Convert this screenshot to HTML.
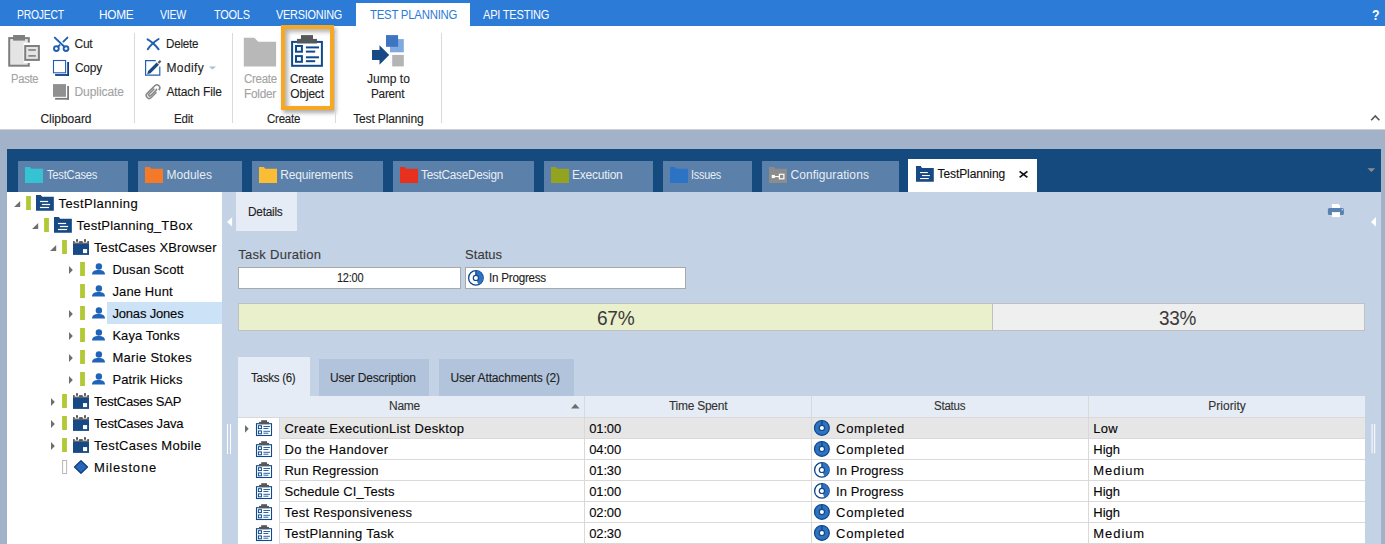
<!DOCTYPE html>
<html><head><meta charset="utf-8"><style>
html,body{margin:0;padding:0;}
body{width:1385px;height:544px;position:relative;overflow:hidden;background:#fff;font-family:"Liberation Sans",sans-serif;}
body>div,body>svg{position:absolute;}
.t{white-space:nowrap;-webkit-text-stroke:0.12px currentColor;}
</style></head><body>
<div style="left:0px;top:0px;width:1385px;height:26px;background:#2b7bd7;"></div>
<div style="left:0px;top:26px;width:1385px;height:103px;background:#ffffff;"></div>
<div style="left:0px;top:129px;width:1385px;height:1px;background:#cfcfcf;"></div>
<div style="left:0px;top:130px;width:1385px;height:414px;background:#a1b2c9;"></div>
<div style="left:7px;top:149px;width:1374px;height:43px;background:#154a7f;"></div>
<div style="left:222px;top:192px;width:1159px;height:352px;background:#c3d2e5;"></div>
<div style="left:7px;top:192px;width:215px;height:352px;background:#ffffff;"></div>
<div style="left:281px;top:25px;width:53px;height:85px;box-sizing:border-box;border:4px solid #f7a823;background:#fff;box-shadow:2px 3px 4px rgba(0,0,0,0.32), inset 3px 3px 4px rgba(0,0,0,0.30);"></div>
<div style="left:356px;top:3px;width:114px;height:23px;background:#ffffff;"></div>
<div class="t" style="left:16.50px;top:8.62px;font-size:12.5px;line-height:12.5px;color:#ffffff;letter-spacing:-0.250px;transform:scaleX(0.8287);transform-origin:0 0;-webkit-text-stroke:0;">PROJECT</div>
<div class="t" style="left:99.40px;top:9.22px;font-size:12.5px;line-height:12.5px;color:#ffffff;letter-spacing:-0.250px;transform:scaleX(0.9442);transform-origin:0 0;-webkit-text-stroke:0;">HOME</div>
<div class="t" style="left:160.40px;top:9.22px;font-size:12.5px;line-height:12.5px;color:#ffffff;letter-spacing:-0.250px;transform:scaleX(0.8429);transform-origin:0 0;-webkit-text-stroke:0;">VIEW</div>
<div class="t" style="left:213.90px;top:9.22px;font-size:12.5px;line-height:12.5px;color:#ffffff;letter-spacing:-0.250px;transform:scaleX(0.8748);transform-origin:0 0;-webkit-text-stroke:0;">TOOLS</div>
<div class="t" style="left:276.20px;top:9.22px;font-size:12.5px;line-height:12.5px;color:#ffffff;letter-spacing:-0.250px;transform:scaleX(0.8697);transform-origin:0 0;-webkit-text-stroke:0;">VERSIONING</div>
<div class="t" style="left:483.40px;top:9.22px;font-size:12.5px;line-height:12.5px;color:#ffffff;letter-spacing:-0.250px;transform:scaleX(0.8846);transform-origin:0 0;-webkit-text-stroke:0;">API TESTING</div>
<div class="t" style="left:369.50px;top:9.22px;font-size:12.5px;line-height:12.5px;color:#2b7bd7;letter-spacing:-0.250px;transform:scaleX(0.9095);transform-origin:0 0;-webkit-text-stroke:0;">TEST PLANNING</div>
<div class="t" style="left:1372.20px;top:7.93px;font-size:14.5px;line-height:14.5px;color:#ffffff;font-weight:bold;-webkit-text-stroke:0;transform:scaleX(0.85);transform-origin:0 0;">?</div>
<div style="left:134px;top:33px;width:1px;height:90px;background:#dadada;"></div>
<div style="left:232px;top:33px;width:1px;height:90px;background:#dadada;"></div>
<div style="left:335px;top:33px;width:1px;height:90px;background:#dadada;"></div>
<div style="left:441px;top:33px;width:1px;height:90px;background:#dadada;"></div>
<div class="t" style="left:10.50px;top:72.54px;font-size:12px;line-height:12px;color:#a3a3a3;letter-spacing:-0.250px;transform:scaleX(0.9264);transform-origin:0 0;">Paste</div>
<div class="t" style="left:74.50px;top:37.74px;font-size:12px;line-height:12px;color:#1e1e1e;letter-spacing:-0.236px;">Cut</div>
<div class="t" style="left:74.50px;top:62.04px;font-size:12px;line-height:12px;color:#1e1e1e;letter-spacing:-0.250px;transform:scaleX(0.9942);transform-origin:0 0;">Copy</div>
<div class="t" style="left:74.50px;top:85.64px;font-size:12px;line-height:12px;color:#a3a3a3;letter-spacing:-0.066px;">Duplicate</div>
<div class="t" style="left:40.50px;top:112.64px;font-size:12px;line-height:12px;color:#1e1e1e;letter-spacing:-0.045px;">Clipboard</div>
<div class="t" style="left:166.40px;top:37.74px;font-size:12px;line-height:12px;color:#1e1e1e;letter-spacing:-0.250px;transform:scaleX(0.9688);transform-origin:0 0;">Delete</div>
<div class="t" style="left:166.40px;top:62.04px;font-size:12px;line-height:12px;color:#1e1e1e;letter-spacing:0.412px;">Modify</div>
<div class="t" style="left:166.40px;top:85.64px;font-size:12px;line-height:12px;color:#1e1e1e;letter-spacing:-0.109px;">Attach File</div>
<div class="t" style="left:173.50px;top:112.64px;font-size:12px;line-height:12px;color:#1e1e1e;letter-spacing:-0.250px;transform:scaleX(0.9636);transform-origin:0 0;">Edit</div>
<div class="t" style="left:243.80px;top:72.84px;font-size:12px;line-height:12px;color:#a3a3a3;letter-spacing:-0.250px;transform:scaleX(0.9522);transform-origin:0 0;">Create</div>
<div class="t" style="left:243.80px;top:87.64px;font-size:12px;line-height:12px;color:#a3a3a3;letter-spacing:-0.250px;transform:scaleX(0.9857);transform-origin:0 0;">Folder</div>
<div class="t" style="left:290.30px;top:72.84px;font-size:12px;line-height:12px;color:#1e1e1e;letter-spacing:-0.250px;transform:scaleX(0.9694);transform-origin:0 0;">Create</div>
<div class="t" style="left:290.30px;top:87.64px;font-size:12px;line-height:12px;color:#1e1e1e;letter-spacing:-0.196px;">Object</div>
<div class="t" style="left:267.40px;top:112.64px;font-size:12px;line-height:12px;color:#1e1e1e;letter-spacing:-0.250px;transform:scaleX(0.9608);transform-origin:0 0;">Create</div>
<div class="t" style="left:367.00px;top:72.84px;font-size:12px;line-height:12px;color:#1e1e1e;letter-spacing:0.019px;">Jump to</div>
<div class="t" style="left:371.40px;top:87.64px;font-size:12px;line-height:12px;color:#1e1e1e;letter-spacing:-0.250px;transform:scaleX(0.9794);transform-origin:0 0;">Parent</div>
<div class="t" style="left:353.20px;top:112.64px;font-size:12px;line-height:12px;color:#1e1e1e;letter-spacing:-0.137px;">Test Planning</div>
<div style="left:18px;top:161px;width:110px;height:31px;background:#5b80a9;"></div>
<div class="t" style="left:47.40px;top:168.64px;font-size:12px;line-height:12px;color:#e8eef6;letter-spacing:-0.250px;transform:scaleX(0.9331);transform-origin:0 0;-webkit-text-stroke:0;">TestCases</div>
<div style="left:138px;top:161px;width:104px;height:31px;background:#5b80a9;"></div>
<div class="t" style="left:166.50px;top:168.64px;font-size:12px;line-height:12px;color:#e8eef6;letter-spacing:0.023px;-webkit-text-stroke:0;">Modules</div>
<div style="left:252px;top:161px;width:131px;height:31px;background:#5b80a9;"></div>
<div class="t" style="left:280.30px;top:168.64px;font-size:12px;line-height:12px;color:#e8eef6;letter-spacing:-0.191px;-webkit-text-stroke:0;">Requirements</div>
<div style="left:393px;top:161px;width:141px;height:31px;background:#5b80a9;"></div>
<div class="t" style="left:421.20px;top:168.64px;font-size:12px;line-height:12px;color:#e8eef6;letter-spacing:-0.250px;transform:scaleX(0.9783);transform-origin:0 0;-webkit-text-stroke:0;">TestCaseDesign</div>
<div style="left:544px;top:161px;width:109px;height:31px;background:#5b80a9;"></div>
<div class="t" style="left:572.00px;top:168.64px;font-size:12px;line-height:12px;color:#e8eef6;letter-spacing:-0.238px;-webkit-text-stroke:0;">Execution</div>
<div style="left:663px;top:161px;width:89px;height:31px;background:#5b80a9;"></div>
<div class="t" style="left:691.40px;top:168.64px;font-size:12px;line-height:12px;color:#e8eef6;letter-spacing:-0.250px;transform:scaleX(0.9034);transform-origin:0 0;-webkit-text-stroke:0;">Issues</div>
<div style="left:762px;top:161px;width:137px;height:31px;background:#5b80a9;"></div>
<div class="t" style="left:790.40px;top:168.64px;font-size:12px;line-height:12px;color:#e8eef6;letter-spacing:0.086px;-webkit-text-stroke:0;">Configurations</div>
<div style="left:908px;top:159px;width:129px;height:33px;background:#ffffff;"></div>
<div class="t" style="left:937.50px;top:168.34px;font-size:12px;line-height:12px;color:#111111;letter-spacing:-0.092px;">TestPlanning</div>
<div style="left:107px;top:302px;width:115px;height:22px;background:#cce3f7;"></div>
<div class="t" style="left:58.50px;top:196.90px;font-size:13px;line-height:13px;color:#050505;letter-spacing:0.433px;">TestPlanning</div>
<div class="t" style="left:76.50px;top:218.90px;font-size:13px;line-height:13px;color:#050505;letter-spacing:0.243px;">TestPlanning_TBox</div>
<div class="t" style="left:94.00px;top:240.90px;font-size:13px;line-height:13px;color:#050505;letter-spacing:0.109px;">TestCases XBrowser</div>
<div class="t" style="left:112.40px;top:262.90px;font-size:13px;line-height:13px;color:#050505;letter-spacing:0.049px;">Dusan Scott</div>
<div class="t" style="left:112.40px;top:284.90px;font-size:13px;line-height:13px;color:#050505;letter-spacing:0.129px;">Jane Hunt</div>
<div class="t" style="left:112.40px;top:306.90px;font-size:13px;line-height:13px;color:#050505;letter-spacing:-0.170px;">Jonas Jones</div>
<div class="t" style="left:112.40px;top:328.90px;font-size:13px;line-height:13px;color:#050505;letter-spacing:0.049px;">Kaya Tonks</div>
<div class="t" style="left:112.40px;top:350.90px;font-size:13px;line-height:13px;color:#050505;letter-spacing:0.313px;">Marie Stokes</div>
<div class="t" style="left:112.40px;top:372.90px;font-size:13px;line-height:13px;color:#050505;letter-spacing:0.126px;">Patrik Hicks</div>
<div class="t" style="left:94.00px;top:394.90px;font-size:13px;line-height:13px;color:#050505;letter-spacing:-0.250px;transform:scaleX(0.9999);transform-origin:0 0;">TestCases SAP</div>
<div class="t" style="left:94.00px;top:416.90px;font-size:13px;line-height:13px;color:#050505;letter-spacing:-0.174px;">TestCases Java</div>
<div class="t" style="left:94.00px;top:438.90px;font-size:13px;line-height:13px;color:#050505;letter-spacing:0.307px;">TestCases Mobile</div>
<div class="t" style="left:94.00px;top:460.90px;font-size:13px;line-height:13px;color:#050505;letter-spacing:0.820px;">Milestone</div>
<div style="left:236px;top:192px;width:61px;height:39px;background:#e6ecf5;"></div>
<div class="t" style="left:248.10px;top:205.64px;font-size:12px;line-height:12px;color:#1e1e1e;letter-spacing:-0.250px;transform:scaleX(0.9862);transform-origin:0 0;">Details</div>
<div class="t" style="left:238.30px;top:247.70px;font-size:13px;line-height:13px;color:#3a3a3a;letter-spacing:0.268px;">Task Duration</div>
<div class="t" style="left:465.00px;top:247.70px;font-size:13px;line-height:13px;color:#3a3a3a;letter-spacing:0.049px;">Status</div>
<div style="left:238px;top:267px;width:223px;height:22px;background:#ffffff;box-sizing:border-box;border:1px solid #a9a9a9;"></div>
<div style="left:465px;top:267px;width:221px;height:22px;background:#ffffff;box-sizing:border-box;border:1px solid #a9a9a9;"></div>
<div class="t" style="left:336.60px;top:271.94px;font-size:12px;line-height:12px;color:#1e1e1e;letter-spacing:-0.250px;transform:scaleX(0.9130);transform-origin:0 0;">12:00</div>
<div class="t" style="left:489.30px;top:271.94px;font-size:12px;line-height:12px;color:#1e1e1e;letter-spacing:-0.250px;transform:scaleX(0.9719);transform-origin:0 0;">In Progress</div>
<div style="left:238px;top:303px;width:1127px;height:28px;background:#efefef;box-sizing:border-box;border:1px solid #c0c0c0;"></div>
<div style="left:239px;top:304px;width:753px;height:26px;background:#eaf0cb;"></div>
<div style="left:992px;top:304px;width:1px;height:26px;background:#c0c0c0;"></div>
<div class="t" style="left:596.50px;top:307.87px;font-size:20px;line-height:20px;color:#3a3a3a;letter-spacing:-0.250px;transform:scaleX(0.9539);transform-origin:0 0;-webkit-text-stroke:0;">67%</div>
<div class="t" style="left:1159.30px;top:307.87px;font-size:20px;line-height:20px;color:#3a3a3a;letter-spacing:-0.250px;transform:scaleX(0.9464);transform-origin:0 0;-webkit-text-stroke:0;">33%</div>
<div style="left:238px;top:357px;width:72px;height:39px;background:#e6ecf5;"></div>
<div style="left:319px;top:359px;width:110px;height:37px;background:#b1c4dc;"></div>
<div style="left:439px;top:359px;width:135px;height:37px;background:#b1c4dc;"></div>
<div class="t" style="left:250.80px;top:371.54px;font-size:12px;line-height:12px;color:#1e1e1e;letter-spacing:-0.250px;transform:scaleX(0.9577);transform-origin:0 0;">Tasks (6)</div>
<div class="t" style="left:330.00px;top:371.84px;font-size:12px;line-height:12px;color:#1e1e1e;letter-spacing:-0.186px;">User Description</div>
<div class="t" style="left:450.40px;top:371.84px;font-size:12px;line-height:12px;color:#1e1e1e;letter-spacing:-0.158px;">User Attachments (2)</div>
<div style="left:238px;top:396px;width:1127px;height:21px;background:#e6ecf5;"></div>
<div style="left:238px;top:417px;width:1127px;height:127px;background:#ffffff;"></div>
<div style="left:280px;top:417px;width:1085px;height:21px;background:#e6e6e6;"></div>
<div style="left:238px;top:417px;width:1127px;height:1px;background:#d9d9d9;"></div>
<div style="left:280px;top:438px;width:1085px;height:1px;background:#d9d9d9;"></div>
<div style="left:280px;top:459px;width:1085px;height:1px;background:#d9d9d9;"></div>
<div style="left:280px;top:480px;width:1085px;height:1px;background:#d9d9d9;"></div>
<div style="left:280px;top:501px;width:1085px;height:1px;background:#d9d9d9;"></div>
<div style="left:280px;top:522px;width:1085px;height:1px;background:#d9d9d9;"></div>
<div style="left:280px;top:543px;width:1085px;height:1px;background:#d9d9d9;"></div>
<div style="left:584px;top:396px;width:1px;height:148px;background:#d9d9d9;"></div>
<div style="left:811px;top:396px;width:1px;height:148px;background:#d9d9d9;"></div>
<div style="left:1088px;top:396px;width:1px;height:148px;background:#d9d9d9;"></div>
<div style="left:279px;top:417px;width:1px;height:127px;background:#d9d9d9;"></div>
<div class="t" style="left:388.60px;top:400.44px;font-size:12px;line-height:12px;color:#333333;letter-spacing:-0.250px;transform:scaleX(0.9979);transform-origin:0 0;">Name</div>
<div class="t" style="left:669.40px;top:400.44px;font-size:12px;line-height:12px;color:#333333;letter-spacing:-0.250px;transform:scaleX(0.9972);transform-origin:0 0;">Time Spent</div>
<div class="t" style="left:934.30px;top:400.44px;font-size:12px;line-height:12px;color:#333333;letter-spacing:-0.250px;transform:scaleX(0.9612);transform-origin:0 0;">Status</div>
<div class="t" style="left:1208.30px;top:400.44px;font-size:12px;line-height:12px;color:#333333;letter-spacing:0.024px;">Priority</div>
<div class="t" style="left:284.40px;top:421.60px;font-size:13px;line-height:13px;color:#050505;letter-spacing:0.309px;">Create ExecutionList Desktop</div>
<div class="t" style="left:589.20px;top:421.60px;font-size:13px;line-height:13px;color:#050505;letter-spacing:-0.132px;">01:00</div>
<div class="t" style="left:836.10px;top:421.60px;font-size:13px;line-height:13px;color:#050505;letter-spacing:0.666px;">Completed</div>
<div class="t" style="left:1093.30px;top:421.60px;font-size:13px;line-height:13px;color:#050505;letter-spacing:0.209px;">Low</div>
<div class="t" style="left:284.40px;top:442.60px;font-size:13px;line-height:13px;color:#050505;letter-spacing:0.387px;">Do the Handover</div>
<div class="t" style="left:589.20px;top:442.60px;font-size:13px;line-height:13px;color:#050505;letter-spacing:-0.132px;">04:00</div>
<div class="t" style="left:836.10px;top:442.60px;font-size:13px;line-height:13px;color:#050505;letter-spacing:0.666px;">Completed</div>
<div class="t" style="left:1093.30px;top:442.60px;font-size:13px;line-height:13px;color:#050505;letter-spacing:-0.014px;">High</div>
<div class="t" style="left:284.40px;top:463.60px;font-size:13px;line-height:13px;color:#050505;letter-spacing:0.076px;">Run Regression</div>
<div class="t" style="left:589.20px;top:463.60px;font-size:13px;line-height:13px;color:#050505;letter-spacing:-0.132px;">01:30</div>
<div class="t" style="left:836.10px;top:463.60px;font-size:13px;line-height:13px;color:#050505;letter-spacing:0.093px;">In Progress</div>
<div class="t" style="left:1093.30px;top:463.60px;font-size:13px;line-height:13px;color:#050505;letter-spacing:0.932px;">Medium</div>
<div class="t" style="left:284.40px;top:484.60px;font-size:13px;line-height:13px;color:#050505;letter-spacing:0.113px;">Schedule CI_Tests</div>
<div class="t" style="left:589.20px;top:484.60px;font-size:13px;line-height:13px;color:#050505;letter-spacing:-0.132px;">01:00</div>
<div class="t" style="left:836.10px;top:484.60px;font-size:13px;line-height:13px;color:#050505;letter-spacing:0.093px;">In Progress</div>
<div class="t" style="left:1093.30px;top:484.60px;font-size:13px;line-height:13px;color:#050505;letter-spacing:-0.014px;">High</div>
<div class="t" style="left:284.40px;top:505.60px;font-size:13px;line-height:13px;color:#050505;letter-spacing:0.265px;">Test Responsiveness</div>
<div class="t" style="left:589.20px;top:505.60px;font-size:13px;line-height:13px;color:#050505;letter-spacing:-0.132px;">02:00</div>
<div class="t" style="left:836.10px;top:505.60px;font-size:13px;line-height:13px;color:#050505;letter-spacing:0.666px;">Completed</div>
<div class="t" style="left:1093.30px;top:505.60px;font-size:13px;line-height:13px;color:#050505;letter-spacing:-0.014px;">High</div>
<div class="t" style="left:284.40px;top:526.60px;font-size:13px;line-height:13px;color:#050505;letter-spacing:0.302px;">TestPlanning Task</div>
<div class="t" style="left:589.20px;top:526.60px;font-size:13px;line-height:13px;color:#050505;letter-spacing:-0.132px;">02:30</div>
<div class="t" style="left:836.10px;top:526.60px;font-size:13px;line-height:13px;color:#050505;letter-spacing:0.666px;">Completed</div>
<div class="t" style="left:1093.30px;top:526.60px;font-size:13px;line-height:13px;color:#050505;letter-spacing:0.932px;">Medium</div>
<svg style="left:0px;top:0px" width="1385" height="544" viewBox="0 0 1385 544"><rect x="9.2" y="38.1" width="19.6" height="27.6" fill="#e4e4e4" stroke="#7f7f7f" stroke-width="2"/><rect x="13.1" y="35" width="11.9" height="5.6" fill="#7f7f7f"/><rect x="23.6" y="42.6" width="17.4" height="20.4" fill="#ffffff"/><rect x="25.2" y="46" width="13.7" height="13.9" fill="#e4e4e4" stroke="#7f7f7f" stroke-width="2"/><rect x="28.3" y="49.2" width="7.5" height="1.6" fill="#7f7f7f"/><rect x="28.3" y="55.1" width="7.5" height="1.6" fill="#7f7f7f"/><g stroke="#1f5fb0" stroke-width="1.9" fill="none" stroke-linecap="round"><line x1="54.8" y1="37.6" x2="64.6" y2="47"/><line x1="67.4" y1="37.6" x2="63.4" y2="41.6"/><line x1="59.6" y1="45.1" x2="58.2" y2="46.5"/><circle cx="56.4" cy="48.6" r="2.4"/><circle cx="66" cy="48.6" r="2.4"/></g><rect x="53.5" y="60.5" width="12.1" height="12.3" fill="none" stroke="#1f5fb0" stroke-width="1.1"/><rect x="67.2" y="62" width="1.8" height="13.9" fill="#0f3f80"/><rect x="55.1" y="74.1" width="13.9" height="1.8" fill="#0f3f80"/><rect x="53" y="84.1" width="13" height="12.7" fill="#909090"/><rect x="67.2" y="86" width="1.8" height="13.7" fill="#7a7a7a"/><rect x="55.1" y="97.9" width="13.9" height="1.8" fill="#7a7a7a"/><g stroke="#1f5fb0" stroke-width="2" stroke-linecap="round" fill="none"><path d="M147.6,39.3 Q153.5,42.5 158.6,49.3"/><path d="M158.6,39 Q151.5,43.5 147.8,49.2"/></g><path d="M155.8,60.6 H145.6 V75.1 H159.8 V66.4" fill="none" stroke="#1f5fb0" stroke-width="1.15"/><path d="M147.2,74.2 L148.1,70.9 L156.6,62.4 L159,64.8 L150.5,73.3 Z" fill="#1a4a80"/><path d="M157.6,62.2 L159.8,60 L161.4,61.6 L159.2,63.8 Z" fill="#5a5a5a"/><path d="M208.9,66.4 H216 L212.45,69.6 Z" fill="#a9bdd6"/><g transform="translate(152.9,91.8) rotate(-45)" fill="none" stroke="#8a8a8a" stroke-width="1.6"><path d="M2.2,2.9 H-5.2 A2.9,2.9 0 0 1 -5.2,-2.9 H5.6 A2.9,2.9 0 0 1 5.6,2.9 H5.2"/><path d="M4.2,0.1 V0.6 A0.6,0.6 0 0 1 3.6,1.2 H-4.3 A1.2,1.2 0 0 1 -4.3,-1.2 H3.2"/></g><path d="M243.8,37.7 H254.3 L258.3,41.8 H276.1 V66.4 H243.8 Z" fill="#b8b8b8"/><rect x="292.1" y="41.9" width="29.8" height="23.9" fill="#ffffff" stroke="#0f4a8a" stroke-width="2"/><rect x="297" y="38.9" width="20" height="4.6" fill="#54575c"/><rect x="301" y="35.1" width="12" height="3.9" fill="#54575c"/><rect x="296" y="46" width="5.9" height="5.7" fill="none" stroke="#0f4a8a" stroke-width="2"/><rect x="296" y="56.1" width="5.9" height="5.7" fill="none" stroke="#0f4a8a" stroke-width="2"/><g fill="#0f4a8a"><rect x="305.9" y="46.4" width="13.1" height="2"/><rect x="305.9" y="50.6" width="9.3" height="2"/><rect x="305.9" y="56.3" width="13.1" height="2"/><rect x="305.9" y="60.2" width="9.3" height="2"/></g><rect x="390" y="39.1" width="13.8" height="13.2" fill="#7eaae0"/><rect x="386" y="35.1" width="12.1" height="11.7" fill="#3d75c2"/><rect x="392.2" y="54.9" width="11.6" height="11.5" fill="#b4b4b4"/><path d="M372,49.9 H379.5 V45.2 L389.2,55 L379.5,64.8 V60 H372 Z" fill="#174a85"/><path d="M1371.2,120.2 L1375.3,116 L1379.4,120.2" fill="none" stroke="#555" stroke-width="1.6"/><path d="M1367.5,168.2 H1375.2 L1371.35,172 Z" fill="#8d8d8d"/><path d="M25,166.9 H29.9 L31.3,168.8 H43 V182.9 H25 Z" fill="#35c3d3"/><path d="M145,166.9 H149.9 L151.3,168.8 H163 V182.9 H145 Z" fill="#f47a2a"/><path d="M259,166.9 H263.9 L265.3,168.8 H277 V182.9 H259 Z" fill="#fbbd34"/><path d="M400,166.9 H404.9 L406.3,168.8 H418 V182.9 H400 Z" fill="#e8301f"/><path d="M551,166.9 H555.9 L557.3,168.8 H569 V182.9 H551 Z" fill="#93a21f"/><path d="M670,166.9 H674.9 L676.3,168.8 H688 V182.9 H670 Z" fill="#2c73c6"/><path d="M769,167 H773.9 L775.3,168.8 H787 V183 H769 Z" fill="#8c8c8c"/><rect x="771.7" y="174.9" width="3.2" height="3.2" fill="#fff"/><rect x="774.5" y="176" width="4.5" height="1.1" fill="#fff"/><rect x="779.4" y="174.3" width="4.5" height="4.5" fill="none" stroke="#fff" stroke-width="1.2"/><path d="M916,165.9 H920.8 L922,168.1 H933.8 V181.8 H916 Z" fill="#174a85"/><g fill="#fff"><rect x="920" y="172" width="7.8" height="1.1"/><rect x="922" y="175" width="7.9" height="1.1"/><rect x="920" y="178" width="8.8" height="1.1"/></g><g stroke="#111" stroke-width="1.7"><line x1="1019.6" y1="171.3" x2="1027.4" y2="177.4"/><line x1="1027.4" y1="171.3" x2="1019.6" y2="177.4"/></g><rect x="26.1" y="196" width="4.8" height="14" fill="#b2c935"/><path d="M20.2,200.9 V207 H14.1 Z" fill="#6e6e6e"/><path d="M36,194.9 H40.8 L42.15,196.85 H53.85 V210.75 H36 Z" fill="#174a85"/><g fill="#fff"><rect x="39.95" y="200.9" width="8.15" height="1.2"/><rect x="41.9" y="203.9" width="8.2" height="1.2"/><rect x="39.95" y="206.9" width="9.15" height="1.2"/></g><rect x="44.1" y="218" width="4.8" height="14" fill="#b2c935"/><path d="M38.2,222.9 V229 H32.1 Z" fill="#6e6e6e"/><path d="M54,216.9 H58.8 L60.15,218.85 H71.85 V232.75 H54 Z" fill="#174a85"/><g fill="#fff"><rect x="57.95" y="222.9" width="8.15" height="1.2"/><rect x="59.9" y="225.9" width="8.2" height="1.2"/><rect x="57.95" y="228.9" width="9.15" height="1.2"/></g><rect x="62.1" y="240" width="4.8" height="14" fill="#b2c935"/><path d="M56.2,244.9 V251 H50.1 Z" fill="#6e6e6e"/><rect x="73" y="243.9" width="16" height="11" fill="#174a85"/><rect x="73" y="242.6" width="16" height="1.3" fill="#54575c"/><rect x="73" y="241.1" width="1.7" height="2" fill="#54575c"/><rect x="79.1" y="241.1" width="3.6" height="2" fill="#54575c"/><rect x="87.2" y="241.1" width="1.8" height="2" fill="#54575c"/><rect x="76" y="239.2" width="2" height="2.6" fill="#54575c"/><rect x="84" y="239.2" width="2" height="2.6" fill="#54575c"/><rect x="83" y="249.1" width="4.1" height="4" fill="#fff"/><rect x="80.1" y="262" width="4.8" height="14" fill="#b2c935"/><path d="M69.0,266.1 L72.8,270 L69.0,273.9 Z" fill="#6e6e6e"/><circle cx="98.9" cy="266.5" r="3.2" fill="#1f64b9"/><path d="M92,274.5 C92.3,271.2 94.5,270.1 98.5,270.1 C102.5,270.1 104.7,271.2 105,274.5 Z" fill="#1f64b9"/><rect x="80.1" y="284" width="4.8" height="14" fill="#b2c935"/><circle cx="98.9" cy="288.5" r="3.2" fill="#1f64b9"/><path d="M92,296.5 C92.3,293.2 94.5,292.1 98.5,292.1 C102.5,292.1 104.7,293.2 105,296.5 Z" fill="#1f64b9"/><rect x="80.1" y="306" width="4.8" height="14" fill="#b2c935"/><path d="M69.0,310.1 L72.8,314 L69.0,317.9 Z" fill="#6e6e6e"/><circle cx="98.9" cy="310.5" r="3.2" fill="#1f64b9"/><path d="M92,318.5 C92.3,315.2 94.5,314.1 98.5,314.1 C102.5,314.1 104.7,315.2 105,318.5 Z" fill="#1f64b9"/><rect x="80.1" y="328" width="4.8" height="14" fill="#b2c935"/><path d="M69.0,332.1 L72.8,336 L69.0,339.9 Z" fill="#6e6e6e"/><circle cx="98.9" cy="332.5" r="3.2" fill="#1f64b9"/><path d="M92,340.5 C92.3,337.2 94.5,336.1 98.5,336.1 C102.5,336.1 104.7,337.2 105,340.5 Z" fill="#1f64b9"/><rect x="80.1" y="350" width="4.8" height="14" fill="#b2c935"/><path d="M69.0,354.1 L72.8,358 L69.0,361.9 Z" fill="#6e6e6e"/><circle cx="98.9" cy="354.5" r="3.2" fill="#1f64b9"/><path d="M92,362.5 C92.3,359.2 94.5,358.1 98.5,358.1 C102.5,358.1 104.7,359.2 105,362.5 Z" fill="#1f64b9"/><rect x="80.1" y="372" width="4.8" height="14" fill="#b2c935"/><path d="M69.0,376.1 L72.8,380 L69.0,383.9 Z" fill="#6e6e6e"/><circle cx="98.9" cy="376.5" r="3.2" fill="#1f64b9"/><path d="M92,384.5 C92.3,381.2 94.5,380.1 98.5,380.1 C102.5,380.1 104.7,381.2 105,384.5 Z" fill="#1f64b9"/><rect x="62.1" y="394" width="4.8" height="14" fill="#b2c935"/><path d="M51.0,398.1 L54.800000000000004,402 L51.0,405.9 Z" fill="#6e6e6e"/><rect x="73" y="397.9" width="16" height="11" fill="#174a85"/><rect x="73" y="396.6" width="16" height="1.3" fill="#54575c"/><rect x="73" y="395.1" width="1.7" height="2" fill="#54575c"/><rect x="79.1" y="395.1" width="3.6" height="2" fill="#54575c"/><rect x="87.2" y="395.1" width="1.8" height="2" fill="#54575c"/><rect x="76" y="393.2" width="2" height="2.6" fill="#54575c"/><rect x="84" y="393.2" width="2" height="2.6" fill="#54575c"/><rect x="83" y="403.1" width="4.1" height="4" fill="#fff"/><rect x="62.1" y="416" width="4.8" height="14" fill="#b2c935"/><path d="M51.0,420.1 L54.800000000000004,424 L51.0,427.9 Z" fill="#6e6e6e"/><rect x="73" y="419.9" width="16" height="11" fill="#174a85"/><rect x="73" y="418.6" width="16" height="1.3" fill="#54575c"/><rect x="73" y="417.1" width="1.7" height="2" fill="#54575c"/><rect x="79.1" y="417.1" width="3.6" height="2" fill="#54575c"/><rect x="87.2" y="417.1" width="1.8" height="2" fill="#54575c"/><rect x="76" y="415.2" width="2" height="2.6" fill="#54575c"/><rect x="84" y="415.2" width="2" height="2.6" fill="#54575c"/><rect x="83" y="425.1" width="4.1" height="4" fill="#fff"/><rect x="62.1" y="438" width="4.8" height="14" fill="#b2c935"/><path d="M51.0,442.1 L54.800000000000004,446 L51.0,449.9 Z" fill="#6e6e6e"/><rect x="73" y="441.9" width="16" height="11" fill="#174a85"/><rect x="73" y="440.6" width="16" height="1.3" fill="#54575c"/><rect x="73" y="439.1" width="1.7" height="2" fill="#54575c"/><rect x="79.1" y="439.1" width="3.6" height="2" fill="#54575c"/><rect x="87.2" y="439.1" width="1.8" height="2" fill="#54575c"/><rect x="76" y="437.2" width="2" height="2.6" fill="#54575c"/><rect x="84" y="437.2" width="2" height="2.6" fill="#54575c"/><rect x="83" y="447.1" width="4.1" height="4" fill="#fff"/><rect x="62.6" y="460.5" width="4" height="13" fill="#fff" stroke="#b8b8b8" stroke-width="1"/><path d="M81,460.70000000000005 L87.5,467 L81,473.29999999999995 L74.5,467 Z" fill="#2766b8" stroke="#0f3f7a" stroke-width="1.3" stroke-linejoin="round"/><path d="M227,221.9 L232.1,217.2 V226.6 Z" fill="#ffffff"/><path d="M1371,222 L1376,217.1 V226.8 Z" fill="#ffffff"/><path d="M1331.9,209 V204 H1338.4 L1340,205.6 V209 Z" fill="#fff"/><rect x="1327.9" y="208.1" width="16" height="6.8" rx="1.5" fill="#5a82b0"/><rect x="1331.9" y="212.1" width="8.1" height="5" fill="#fff"/><circle cx="1342.3" cy="209.7" r="0.6" fill="#fff"/><circle cx="475.9" cy="277.9" r="7.3" fill="#fff" stroke="#0c438a" stroke-width="1.3"/><path d="M475.9,277.9 V270.59999999999997 A7.3,7.3 0 0 1 478.4,284.76 Z" fill="#2f73c0"/><line x1="475.9" y1="270.59999999999997" x2="475.9" y2="275.4" stroke="#0f4a8a" stroke-width="1.3"/><circle cx="475.9" cy="277.9" r="2.6" fill="#fff" stroke="#0f4a8a" stroke-width="1.2"/><path d="M245,424.9 L248.7,428.8 L245,432.8 Z" fill="#6e6e6e"/><rect x="256.5" y="423.7" width="15" height="11.8" fill="#fff" stroke="#0f4a8a" stroke-width="1.1"/><rect x="259" y="421.9" width="10" height="2.3" fill="#54575c"/><rect x="261.2" y="420.2" width="5.8" height="1.8" fill="#54575c"/><rect x="258.4" y="425.7" width="3" height="2.9" fill="none" stroke="#0f4a8a" stroke-width="1"/><rect x="258.4" y="430.9" width="3" height="2.9" fill="none" stroke="#0f4a8a" stroke-width="1"/><g fill="#2a65a8"><rect x="263.4" y="426" width="6.6" height="1"/><rect x="263.4" y="428" width="5" height="1"/><rect x="263.4" y="430.8" width="6.6" height="1"/><rect x="263.4" y="432.7" width="5" height="1"/></g><circle cx="821.9" cy="427.9" r="7.4" fill="#2f73c0" stroke="#0c438a" stroke-width="1.2"/><line x1="821.9" y1="420.59999999999997" x2="821.9" y2="425.4" stroke="#0f4a8a" stroke-width="1.4"/><circle cx="821.9" cy="427.9" r="2.6" fill="#fff" stroke="#0f4a8a" stroke-width="1.2"/><rect x="256.5" y="444.7" width="15" height="11.8" fill="#fff" stroke="#0f4a8a" stroke-width="1.1"/><rect x="259" y="442.9" width="10" height="2.3" fill="#54575c"/><rect x="261.2" y="441.2" width="5.8" height="1.8" fill="#54575c"/><rect x="258.4" y="446.7" width="3" height="2.9" fill="none" stroke="#0f4a8a" stroke-width="1"/><rect x="258.4" y="451.9" width="3" height="2.9" fill="none" stroke="#0f4a8a" stroke-width="1"/><g fill="#2a65a8"><rect x="263.4" y="447" width="6.6" height="1"/><rect x="263.4" y="449" width="5" height="1"/><rect x="263.4" y="451.8" width="6.6" height="1"/><rect x="263.4" y="453.7" width="5" height="1"/></g><circle cx="821.9" cy="448.9" r="7.4" fill="#2f73c0" stroke="#0c438a" stroke-width="1.2"/><line x1="821.9" y1="441.59999999999997" x2="821.9" y2="446.4" stroke="#0f4a8a" stroke-width="1.4"/><circle cx="821.9" cy="448.9" r="2.6" fill="#fff" stroke="#0f4a8a" stroke-width="1.2"/><rect x="256.5" y="465.7" width="15" height="11.8" fill="#fff" stroke="#0f4a8a" stroke-width="1.1"/><rect x="259" y="463.9" width="10" height="2.3" fill="#54575c"/><rect x="261.2" y="462.2" width="5.8" height="1.8" fill="#54575c"/><rect x="258.4" y="467.7" width="3" height="2.9" fill="none" stroke="#0f4a8a" stroke-width="1"/><rect x="258.4" y="472.9" width="3" height="2.9" fill="none" stroke="#0f4a8a" stroke-width="1"/><g fill="#2a65a8"><rect x="263.4" y="468" width="6.6" height="1"/><rect x="263.4" y="470" width="5" height="1"/><rect x="263.4" y="472.8" width="6.6" height="1"/><rect x="263.4" y="474.7" width="5" height="1"/></g><circle cx="821.9" cy="469.9" r="7.3" fill="#fff" stroke="#0c438a" stroke-width="1.3"/><path d="M821.9,469.9 V462.59999999999997 A7.3,7.3 0 0 1 824.4,476.76 Z" fill="#2f73c0"/><line x1="821.9" y1="462.59999999999997" x2="821.9" y2="467.4" stroke="#0f4a8a" stroke-width="1.3"/><circle cx="821.9" cy="469.9" r="2.6" fill="#fff" stroke="#0f4a8a" stroke-width="1.2"/><rect x="256.5" y="486.7" width="15" height="11.8" fill="#fff" stroke="#0f4a8a" stroke-width="1.1"/><rect x="259" y="484.9" width="10" height="2.3" fill="#54575c"/><rect x="261.2" y="483.2" width="5.8" height="1.8" fill="#54575c"/><rect x="258.4" y="488.7" width="3" height="2.9" fill="none" stroke="#0f4a8a" stroke-width="1"/><rect x="258.4" y="493.9" width="3" height="2.9" fill="none" stroke="#0f4a8a" stroke-width="1"/><g fill="#2a65a8"><rect x="263.4" y="489" width="6.6" height="1"/><rect x="263.4" y="491" width="5" height="1"/><rect x="263.4" y="493.8" width="6.6" height="1"/><rect x="263.4" y="495.7" width="5" height="1"/></g><circle cx="821.9" cy="490.9" r="7.3" fill="#fff" stroke="#0c438a" stroke-width="1.3"/><path d="M821.9,490.9 V483.59999999999997 A7.3,7.3 0 0 1 824.4,497.76 Z" fill="#2f73c0"/><line x1="821.9" y1="483.59999999999997" x2="821.9" y2="488.4" stroke="#0f4a8a" stroke-width="1.3"/><circle cx="821.9" cy="490.9" r="2.6" fill="#fff" stroke="#0f4a8a" stroke-width="1.2"/><rect x="256.5" y="507.7" width="15" height="11.8" fill="#fff" stroke="#0f4a8a" stroke-width="1.1"/><rect x="259" y="505.9" width="10" height="2.3" fill="#54575c"/><rect x="261.2" y="504.2" width="5.8" height="1.8" fill="#54575c"/><rect x="258.4" y="509.7" width="3" height="2.9" fill="none" stroke="#0f4a8a" stroke-width="1"/><rect x="258.4" y="514.9" width="3" height="2.9" fill="none" stroke="#0f4a8a" stroke-width="1"/><g fill="#2a65a8"><rect x="263.4" y="510" width="6.6" height="1"/><rect x="263.4" y="512" width="5" height="1"/><rect x="263.4" y="514.8" width="6.6" height="1"/><rect x="263.4" y="516.7" width="5" height="1"/></g><circle cx="821.9" cy="511.9" r="7.4" fill="#2f73c0" stroke="#0c438a" stroke-width="1.2"/><line x1="821.9" y1="504.59999999999997" x2="821.9" y2="509.4" stroke="#0f4a8a" stroke-width="1.4"/><circle cx="821.9" cy="511.9" r="2.6" fill="#fff" stroke="#0f4a8a" stroke-width="1.2"/><rect x="256.5" y="528.7" width="15" height="11.8" fill="#fff" stroke="#0f4a8a" stroke-width="1.1"/><rect x="259" y="526.9" width="10" height="2.3" fill="#54575c"/><rect x="261.2" y="525.2" width="5.8" height="1.8" fill="#54575c"/><rect x="258.4" y="530.7" width="3" height="2.9" fill="none" stroke="#0f4a8a" stroke-width="1"/><rect x="258.4" y="535.9" width="3" height="2.9" fill="none" stroke="#0f4a8a" stroke-width="1"/><g fill="#2a65a8"><rect x="263.4" y="531" width="6.6" height="1"/><rect x="263.4" y="533" width="5" height="1"/><rect x="263.4" y="535.8" width="6.6" height="1"/><rect x="263.4" y="537.7" width="5" height="1"/></g><circle cx="821.9" cy="532.9" r="7.4" fill="#2f73c0" stroke="#0c438a" stroke-width="1.2"/><line x1="821.9" y1="525.6" x2="821.9" y2="530.4" stroke="#0f4a8a" stroke-width="1.4"/><circle cx="821.9" cy="532.9" r="2.6" fill="#fff" stroke="#0f4a8a" stroke-width="1.2"/><path d="M571,408.5 L575.3,403.8 L579.6,408.5 Z" fill="#6e6e6e"/><rect x="227" y="424" width="1" height="30" fill="#fff"/><rect x="230" y="424" width="1" height="30" fill="#fff"/><rect x="1371.6" y="424" width="1" height="29.3" fill="#fff"/><rect x="1374.2" y="424" width="1" height="29.3" fill="#fff"/></svg>
</body></html>
